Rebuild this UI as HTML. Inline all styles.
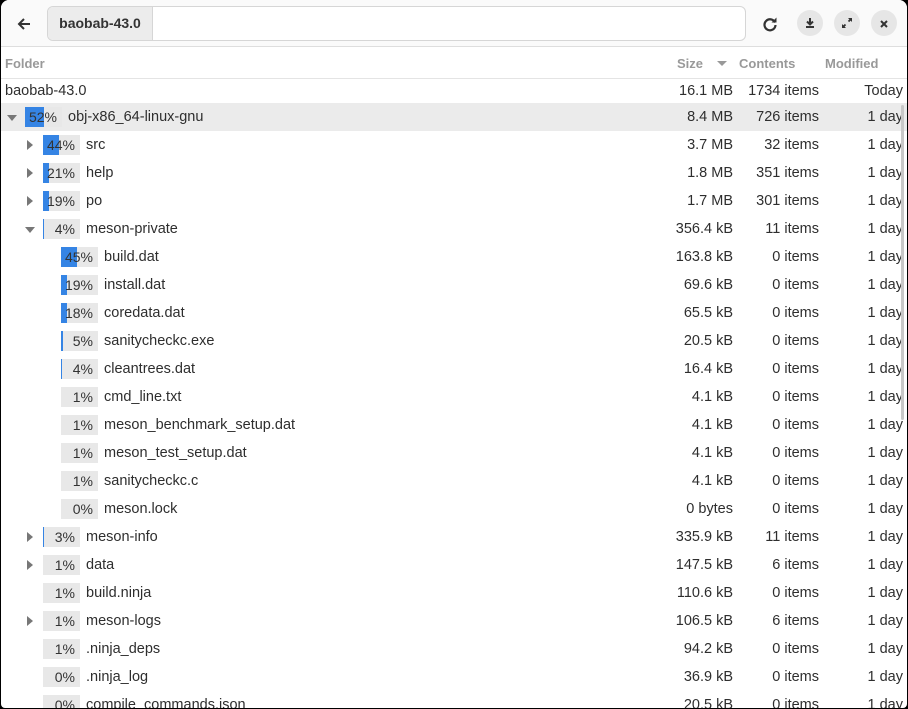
<!DOCTYPE html>
<html><head><style>
*{margin:0;padding:0;box-sizing:border-box}
html,body{width:908px;height:709px;overflow:hidden;background:#000}
#win{position:absolute;left:1px;top:0;width:906px;height:708px;background:#fff;border-radius:8px 8px 4px 4px;overflow:hidden;font-family:"Liberation Sans",sans-serif;font-size:14.5px;color:#2e2e2e}
#hb{position:absolute;left:0;top:0;width:906px;height:47px;background:#fafafa;border-bottom:1px solid #dedede}
.entry{position:absolute;left:46px;top:6px;width:699px;height:35px;border:1px solid #d6d6d6;border-radius:6px;background:#fff;overflow:hidden}
.seg{position:absolute;left:0;top:0;width:105px;height:33px;background:#ececec;border-right:1px solid #d6d6d6;font-weight:bold;font-size:14px;line-height:33px;text-align:center;color:#333}
.cb{position:absolute;top:10px;width:26px;height:26px;border-radius:13px;background:#e6e6e6}
.row{position:absolute;left:0;width:906px;height:28px;line-height:28px}
.box{position:absolute;top:4px;width:37px;height:20px;background:#e8e8e8;overflow:hidden}
.fill{position:absolute;left:0;top:0;height:20px;background:#3584e4}
.pt{position:absolute;right:5px;top:0;line-height:20px;font-size:14px;color:#333}
.nm{position:absolute;top:0}
.r{position:absolute;top:0;text-align:right}
.sz{right:174px}.ct{right:88px}.md{right:4px}
.arr{position:absolute;top:9px;width:0;height:0}
.cl{border-top:5px solid transparent;border-bottom:5px solid transparent;border-left:6px solid #777}
.op{top:12px;border-left:5px solid transparent;border-right:5px solid transparent;border-top:6px solid #777}
</style></head><body><div id="win">
<div id="hb">
<svg style="position:absolute;left:15px;top:16px" width="16" height="16" viewBox="0 0 16 16"><path d="M14 8H3M8 3L3 8l5 5" stroke="#333" stroke-width="2" fill="none"/></svg>
<div class="entry"><div class="seg">baobab-43.0</div></div>
<svg style="position:absolute;left:761px;top:16px" width="16" height="16" viewBox="0 0 16 16"><path d="M13 6.5A5.5 5.5 0 1 0 13.5 9" stroke="#333" stroke-width="2.2" fill="none"/><path d="M9.5 6.5h5v-5z" fill="#333"/></svg>
<div class="cb" style="left:796px"></div><svg style="position:absolute;left:803px;top:17px" width="12" height="12" viewBox="0 0 12 12"><path d="M6 1v6M3 4.5L6 7.5 9 4.5M2 10h8" stroke="#333" stroke-width="2" fill="none"/></svg>
<div class="cb" style="left:833px"></div><svg style="position:absolute;left:840px;top:17px" width="12" height="12" viewBox="0 0 12 12"><path d="M7 1h4v4zM5 11H1V7z" fill="#333"/><path d="M10 2L7.5 4.5M2 10l2.5-2.5" stroke="#333" stroke-width="1.8"/></svg>
<div class="cb" style="left:870px"></div><svg style="position:absolute;left:878px;top:19px" width="10" height="10" viewBox="0 0 10 10"><path d="M2 2l6 6M8 2l-6 6" stroke="#333" stroke-width="2"/></svg>
</div>
<div style="position:absolute;left:0;top:48px;width:906px;height:31px;border-bottom:1px solid #e4e4e4;color:#999;font-weight:bold;font-size:13px;line-height:31px">
<span style="position:absolute;left:4px">Folder</span>
<span style="position:absolute;left:676px">Size</span>
<span style="position:absolute;left:716px;top:13px;border-left:5px solid transparent;border-right:5px solid transparent;border-top:5px solid #999;height:0;width:0"></span>
<span style="position:absolute;left:738px">Contents</span>
<span style="position:absolute;left:824px">Modified</span>
</div>
<div class="row" style="top:77px"><span class="nm" style="left:4px">baobab-43.0</span><span class="r sz">16.1 MB</span><span class="r ct">1734 items</span><span class="r md">Today</span></div>
<div id="rows"></div>
<div style="position:absolute;left:900px;top:105px;width:3px;height:315px;background:#c8c8c8;border-radius:2px"></div>
</div>
<script>
var d=[
[1,'o',52,'obj-x86_64-linux-gnu','8.4 MB','726 items'],
[2,'c',44,'src','3.7 MB','32 items'],
[2,'c',21,'help','1.8 MB','351 items'],
[2,'c',19,'po','1.7 MB','301 items'],
[2,'o',4,'meson-private','356.4 kB','11 items'],
[3,'',45,'build.dat','163.8 kB','0 items'],
[3,'',19,'install.dat','69.6 kB','0 items'],
[3,'',18,'coredata.dat','65.5 kB','0 items'],
[3,'',5,'sanitycheckc.exe','20.5 kB','0 items'],
[3,'',4,'cleantrees.dat','16.4 kB','0 items'],
[3,'',1,'cmd_line.txt','4.1 kB','0 items'],
[3,'',1,'meson_benchmark_setup.dat','4.1 kB','0 items'],
[3,'',1,'meson_test_setup.dat','4.1 kB','0 items'],
[3,'',1,'sanitycheckc.c','4.1 kB','0 items'],
[3,'',0,'meson.lock','0 bytes','0 items'],
[2,'c',3,'meson-info','335.9 kB','11 items'],
[2,'c',1,'data','147.5 kB','6 items'],
[2,'',1,'build.ninja','110.6 kB','0 items'],
[2,'c',1,'meson-logs','106.5 kB','6 items'],
[2,'',1,'.ninja_deps','94.2 kB','0 items'],
[2,'',0,'.ninja_log','36.9 kB','0 items'],
[2,'',0,'compile_commands.json','20.5 kB','0 items']];
var h='';
d.forEach(function(r,i){
var top=103+i*28,bx=24+(r[0]-1)*18,ax=6+(r[0]-1)*18;
var fw=r[2]<=1?0:Math.max(1,Math.round(r[2]*37/100));
if(r[2]==52)fw=19;if(r[2]==44)fw=16;if(r[2]==45)fw=16;if(r[2]==21||r[2]==19||r[2]==18)fw=6;
h+='<div class="row" style="top:'+top+'px;'+(i==0?'background:#ebebeb':'')+'">';
if(r[1])h+='<span class="arr '+(r[1]=='o'?'op':'cl')+'" style="left:'+(r[1]=='o'?ax:ax+2)+'px"></span>';
h+='<div class="box" style="left:'+bx+'px"><div class="fill" style="width:'+fw+'px"></div><span class="pt">'+r[2]+'%</span></div>';
h+='<span class="nm" style="left:'+(bx+43)+'px">'+r[3]+'</span><span class="r sz">'+r[4]+'</span><span class="r ct">'+r[5]+'</span><span class="r md">1 day</span></div>';
});
document.getElementById('rows').innerHTML=h;
</script>
</body></html>
